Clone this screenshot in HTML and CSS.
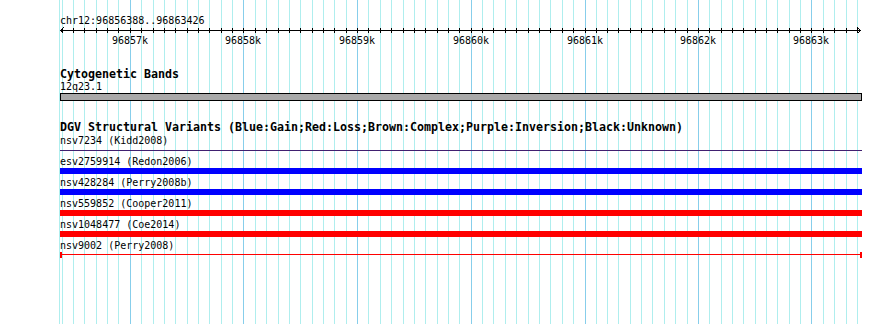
FILE: index.html
```html
<!DOCTYPE html>
<html lang="en">
<head>
<meta charset="utf-8">
<title>chr12:96856388..96863426</title>
<link rel="stylesheet" href="styles.css">
</head>
<body>
<div class="panel">
  <svg class="grid" width="890" height="324" viewBox="0 0 890 324">
    <path class="grid__minor" d="M59.5 0v324M62.5 0v324M73.5 0v324M84.5 0v324M96.5 0v324M107.5 0v324M118.5 0v324M141.5 0v324M153.5 0v324M164.5 0v324M175.5 0v324M187.5 0v324M198.5 0v324M209.5 0v324M221.5 0v324M232.5 0v324M255.5 0v324M266.5 0v324M278.5 0v324M289.5 0v324M300.5 0v324M312.5 0v324M323.5 0v324M334.5 0v324M346.5 0v324M368.5 0v324M380.5 0v324M391.5 0v324M403.5 0v324M414.5 0v324M425.5 0v324M437.5 0v324M448.5 0v324M459.5 0v324M482.5 0v324M493.5 0v324M505.5 0v324M516.5 0v324M528.5 0v324M539.5 0v324M550.5 0v324M562.5 0v324M573.5 0v324M596.5 0v324M607.5 0v324M618.5 0v324M630.5 0v324M641.5 0v324M652.5 0v324M664.5 0v324M675.5 0v324M687.5 0v324M709.5 0v324M721.5 0v324M732.5 0v324M743.5 0v324M755.5 0v324M766.5 0v324M777.5 0v324M789.5 0v324M800.5 0v324M823.5 0v324M834.5 0v324M846.5 0v324M857.5 0v324"/>
    <path class="grid__major" d="M130.5 0v324M243.5 0v324M357.5 0v324M471.5 0v324M585.5 0v324M698.5 0v324M811.5 0v324"/>
  </svg>

  <svg class="ruler" width="890" height="50" viewBox="0 0 890 50">
    <text class="ruler__chr" x="60" y="24">chr12:96856388..96863426</text>
    <path class="ruler__axis" d="M60 30.5H861M63.5 27.5L60.5 30.5L63.5 33.5M857.5 27.5L860.5 30.5L857.5 33.5"/>
    <path class="ruler__ticks" d="M62.5 28v5M73.5 28v5M84.5 28v5M96.5 28v5M107.5 28v5M118.5 28v5M130.5 28v5M141.5 28v5M153.5 28v5M164.5 28v5M175.5 28v5M187.5 28v5M198.5 28v5M209.5 28v5M221.5 28v5M232.5 28v5M243.5 28v5M255.5 28v5M266.5 28v5M278.5 28v5M289.5 28v5M300.5 28v5M312.5 28v5M323.5 28v5M334.5 28v5M346.5 28v5M357.5 28v5M368.5 28v5M380.5 28v5M391.5 28v5M403.5 28v5M414.5 28v5M425.5 28v5M437.5 28v5M448.5 28v5M459.5 28v5M471.5 28v5M482.5 28v5M493.5 28v5M505.5 28v5M516.5 28v5M528.5 28v5M539.5 28v5M550.5 28v5M562.5 28v5M573.5 28v5M585.5 28v5M596.5 28v5M607.5 28v5M618.5 28v5M630.5 28v5M641.5 28v5M652.5 28v5M664.5 28v5M675.5 28v5M687.5 28v5M698.5 28v5M709.5 28v5M721.5 28v5M732.5 28v5M743.5 28v5M755.5 28v5M766.5 28v5M777.5 28v5M789.5 28v5M800.5 28v5M811.5 28v5M823.5 28v5M834.5 28v5M846.5 28v5M857.5 28v5"/>
    <text class="ruler__label" x="130" y="44">96857k</text>
    <text class="ruler__label" x="243" y="44">96858k</text>
    <text class="ruler__label" x="357" y="44">96859k</text>
    <text class="ruler__label" x="471" y="44">96860k</text>
    <text class="ruler__label" x="585" y="44">96861k</text>
    <text class="ruler__label" x="698" y="44">96862k</text>
    <text class="ruler__label" x="811" y="44">96863k</text>
  </svg>

  <section class="track track--cyto">
    <h2 class="track__title">Cytogenetic Bands</h2>
    <div class="feat">
      <div class="feat__label">12q23.1</div>
      <div class="band"></div>
    </div>
  </section>

  <section class="track track--dgv">
    <h2 class="track__title">DGV Structural Variants (Blue:Gain;Red:Loss;Brown:Complex;Purple:Inversion;Black:Unknown)</h2>
    <div class="feat feat--sv">
      <div class="feat__label">nsv7234 (Kidd2008)</div>
      <div class="bar bar--inversion"></div>
    </div>
    <div class="feat feat--sv">
      <div class="feat__label">esv2759914 (Redon2006)</div>
      <div class="bar bar--gain"></div>
    </div>
    <div class="feat feat--sv">
      <div class="feat__label">nsv428284 (Perry2008b)</div>
      <div class="bar bar--gain"></div>
    </div>
    <div class="feat feat--sv">
      <div class="feat__label">nsv559852 (Cooper2011)</div>
      <div class="bar bar--loss"></div>
    </div>
    <div class="feat feat--sv">
      <div class="feat__label">nsv1048477 (Coe2014)</div>
      <div class="bar bar--loss"></div>
    </div>
    <div class="feat feat--sv">
      <div class="feat__label">nsv9002 (Perry2008)</div>
      <div class="bar bar--loss-line"></div>
    </div>
  </section>
</div>
</body>
</html>
```

FILE: styles.css
```css
* {
  box-sizing: border-box;
}

html,
body {
  margin: 0;
  padding: 0;
  background: #ffffff;
}

.panel {
  position: relative;
  width: 890px;
  height: 324px;
  overflow: hidden;
  font-family: "DejaVu Sans Mono", "Liberation Mono", monospace;
  color: #000000;
}

/* background grid */
.grid {
  position: absolute;
  left: 0;
  top: 0;
  z-index: 0;
}

.grid path {
  fill: none;
  stroke-width: 1;
  shape-rendering: crispEdges;
}

.grid__minor {
  stroke: #afeeee;
}

.grid__major {
  stroke: #87ceeb;
}

/* ruler */
.ruler {
  display: block;
  position: relative;
  z-index: 1;
}

.ruler__axis,
.ruler__ticks {
  fill: none;
  stroke: #000000;
  stroke-width: 1;
  shape-rendering: crispEdges;
}

.ruler__chr,
.ruler__label {
  font-family: "DejaVu Sans Mono", "Liberation Mono", monospace;
  font-size: 10px;
  fill: #000000;
}

.ruler__label {
  text-anchor: middle;
}

/* tracks */
.track {
  position: relative;
  z-index: 1;
  margin-left: 60px;
  width: 802px;
}

.track--cyto {
  margin-top: 18px;
}

.track--dgv {
  margin-top: 20px;
}

.track__title {
  margin: 0;
  font-size: 11.63px;
  line-height: 12px;
  font-weight: bold;
  white-space: nowrap;
}

.track--cyto .track__title {
  margin-bottom: 1px;
}

.track--dgv .track__title {
  margin-bottom: 2px;
}

.feat__label {
  font-size: 10px;
  line-height: 12px;
  white-space: nowrap;
}

.feat--sv {
  margin-bottom: 3px;
}

.band {
  height: 8px;
  border: 1px solid #000000;
  background: #a9a9a9;
}

.bar {
  height: 6px;
}

.bar--gain {
  background: #0000ff;
}

.bar--loss {
  background: #ff0000;
}

.bar--inversion {
  background: linear-gradient(#402070, #402070) 0 3px / 100% 1px no-repeat;
}

.bar--loss-line {
  border-left: 2px solid #ff0000;
  border-right: 2px solid #ff0000;
  background: linear-gradient(#ff0000, #ff0000) 0 2px / 100% 1px no-repeat;
}
```
